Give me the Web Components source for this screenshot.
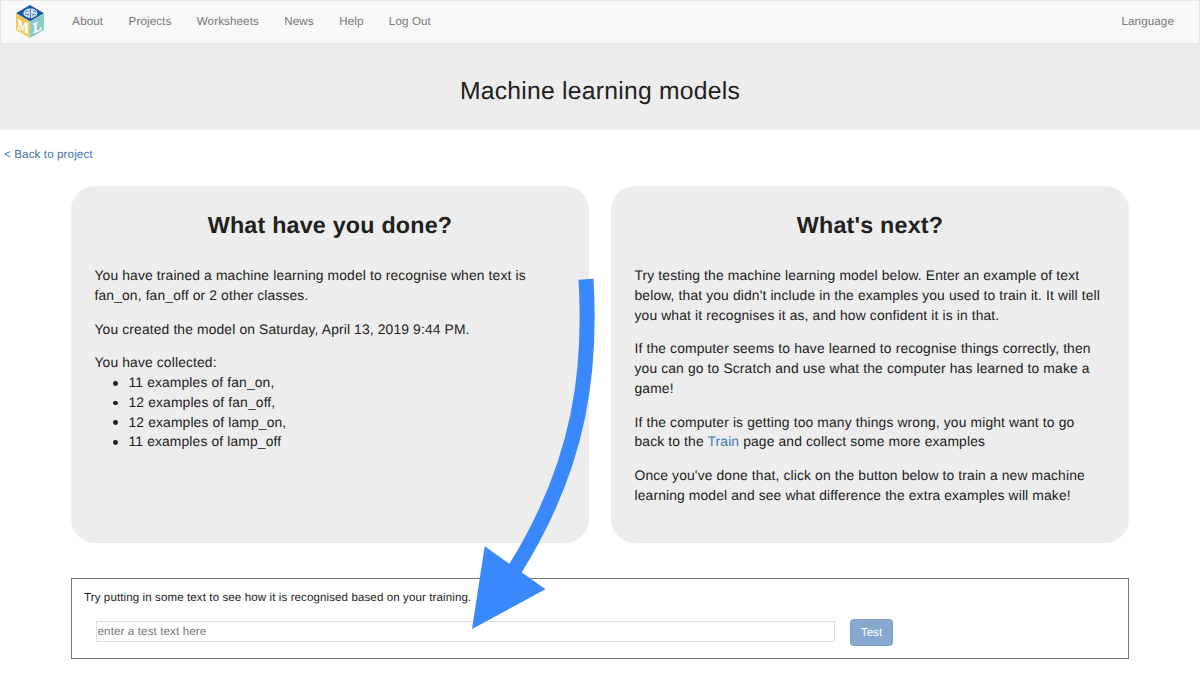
<!DOCTYPE html>
<html lang="en">
<head>
<meta charset="utf-8">
<title>Machine learning models</title>
<style>
html,body{margin:0;padding:0;background:#fff}
body{width:1200px;height:678px;overflow:hidden;font-family:"Liberation Sans",Arial,sans-serif;color:#212121;font-size:13.85px;line-height:19.75px;letter-spacing:.138px;text-rendering:geometricPrecision}
</style>
</head>
<body>
<ml-app></ml-app>
<script>
const define=(name,html)=>customElements.define(name,class extends HTMLElement{
  constructor(){super();this.attachShadow({mode:"open"}).innerHTML=html;}
});

define("ml-logo",`<style>:host{display:block;width:28px;height:33px}svg{display:block}text{font-family:"Liberation Serif",serif;font-weight:bold;fill:#fff;stroke:#fff;stroke-width:.35;letter-spacing:0}</style>
<svg width="28" height="33" viewBox="0 0 28 33">
<path d="M0 8.3 14 0l14 8.3-14 8.2z" fill="#1858a8"/>
<path d="M0 8.3l14 8.2V33L0 25z" fill="#f3c75c"/>
<path d="M28 8.3l-14 8.2V33l14-8z" fill="#8acbcb"/>
<ellipse cx="14.4" cy="8.3" rx="7" ry="4.7" fill="#dce8f5"/>
<path d="M14.4 4v8.8M9 7.2c2-2 2.4 0 3.5-1.4M9.2 9.7c1.5-1.5 2.4.8 3.8-.8M11.2 11.5l1-1.3M20 7.2c-2-2-2.4 0-3.5-1.4M19.6 9.7c-1.5-1.5-2.4.8-3.8-.8M17.7 11.5l-1-1.3" fill="none" stroke="#1858a8" stroke-width=".8"/>
<text transform="matrix(1 .4 0 1 1.2 24.2)" font-size="15.5" textLength="11.6" lengthAdjust="spacingAndGlyphs">M</text>
<text transform="matrix(1 -.4 0 1 17 28.2)" font-size="14.5" textLength="8.6" lengthAdjust="spacingAndGlyphs">L</text>
</svg>`);

define("nav-link",`<style>:host{display:block}a{color:#777;text-decoration:none}</style><a><slot></slot></a>`);

define("nav-bar",`<style>:host{display:flex;box-sizing:border-box;height:44px;background:#f8f8f8;border:1px solid #e7e7e7;padding:4px 25px 0 15px;font-size:11.6px;line-height:33px;letter-spacing:.115px}
nav{display:flex;gap:25.4px;margin-left:28.3px}nav+nav-link{margin-left:auto}</style>
<ml-logo></ml-logo><nav><nav-link>About</nav-link><nav-link>Projects</nav-link><nav-link>Worksheets</nav-link><nav-link>News</nav-link><nav-link>Help</nav-link><nav-link>Log Out</nav-link></nav><nav-link>Language</nav-link>`);

define("page-banner",`<style>:host{display:block;height:86px;background:#ededed;text-align:center}h1{margin:0;padding-top:33px;font-weight:400;font-size:24.7px;line-height:30px;letter-spacing:.25px}</style><h1><slot></slot></h1>`);

define("back-link",`<style>:host{display:block;padding:15px 4px 0;height:40.5px;font-size:11.6px;letter-spacing:.115px}a{color:#3b70b0}</style><a><slot></slot></a>`);

define("info-card",`<style>:host{display:block;box-sizing:border-box;width:518px;height:357px;border-radius:24px;background:#ededed;padding:24.5px 23.5px 0;white-space:nowrap}
h2{margin:0 0 26px;text-align:center;font-size:23.3px;line-height:30px;letter-spacing:.2px}
::slotted(p){margin:0 0 14px!important}</style><h2><slot name="title"></slot></h2><slot></slot>`);

define("example-list",`<style>:host{display:block;margin-top:-14px}ul{margin:0;padding-left:34px;list-style:none}li{position:relative}li::before{content:"";position:absolute;left:-15.4px;top:7.8px;width:4.8px;height:4.8px;border-radius:50%;background:#212121}</style>
<ul><li>11 examples of fan_on,</li><li>12 examples of fan_off,</li><li>12 examples of lamp_on,</li><li>11 examples of lamp_off</li></ul>`);

define("test-form",`<style>:host{display:block;box-sizing:border-box;margin:35.4px 71px 0;height:81px;border:1px solid #777;padding:10px 12px 0;font-size:11.6px;letter-spacing:.115px}
p{margin:0;font-size:11.52px}form{display:flex;align-items:flex-start;gap:15px;padding:10px 0 0 11.5px}
input{box-sizing:border-box;width:739.5px;height:21px;margin-top:2.5px;border:1px solid #ddd;padding:0 1px;font:inherit;letter-spacing:inherit;text-rendering:inherit;background:#fff}
input::placeholder{color:#777;opacity:1}
button{box-sizing:border-box;width:43px;height:27px;border:1px solid #7b9dc5;border-radius:3.5px;background:#87a8cf;color:#fff;font:inherit;text-rendering:inherit;padding:1px 0 0}</style>
<p>Try putting in some text to see how it is recognised based on your training.</p>
<form><input type="text" placeholder="enter a test text here"><button type="button">Test</button></form>`);

define("pointer-arrow",`<style>:host{position:absolute;left:460px;top:270px;pointer-events:none}svg{display:block}</style>
<svg width="150" height="370" viewBox="460 270 150 370"><path d="M586 279.3C591 365 583 460 515 569" fill="none" stroke="#3a88fd" stroke-width="15"/><path d="M484.7 546.2L472 629l73.5-39.7z" fill="#3a88fd"/></svg>`);

define("ml-app",`<style>:host{display:block;position:relative}section{display:flex;justify-content:center;gap:22px}a{color:#3b78b8}</style>
<nav-bar></nav-bar><page-banner>Machine learning models</page-banner><back-link>&lt; Back to project</back-link>
<section>
<info-card><span slot="title">What have you done?</span>
<p>You have trained a machine learning model to recognise when text is<br>fan_on, fan_off or 2 other classes.</p><p>You created the model on Saturday, April 13, 2019 9:44 PM.</p><p>You have collected:</p><example-list></example-list></info-card>
<info-card><span slot="title">What's next?</span>
<p>Try testing the machine learning model below. Enter an example of text<br>below, that you didn't include in the examples you used to train it. It will tell<br>you what it recognises it as, and how confident it is in that.</p><p>If the computer seems to have learned to recognise things correctly, then<br>you can go to Scratch and use what the computer has learned to make a<br>game!</p><p>If the computer is getting too many things wrong, you might want to go<br>back to the <a>Train</a> page and collect some more examples</p><p>Once you've done that, click on the button below to train a new machine<br>learning model and see what difference the extra examples will make!</p></info-card>
</section><test-form></test-form><pointer-arrow></pointer-arrow>`);
</script>
</body>
</html>
